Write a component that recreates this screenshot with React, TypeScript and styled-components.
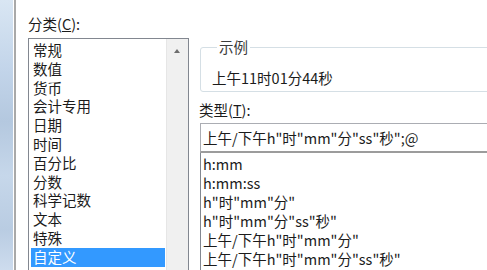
import React from 'react';
import styled, { createGlobalStyle } from 'styled-components';

const categories = ['常规', '数值', '货币', '会计专用', '日期', '时间', '百分比', '分数', '科学记数', '文本', '特殊', '自定义'];
const formats = ['h:mm', 'h:mm:ss', 'h"时"mm"分"', 'h"时"mm"分"ss"秒"', '上午/下午h"时"mm"分"', '上午/下午h"时"mm"分"ss"秒"'];

export default function App() {
  return (
    <>
      <GlobalStyle />
      <Page>
        <WindowEdge />
        <Divider />
        <Content>
          <LeftColumn>
            <Label>
              分类(<u>C</u>):
            </Label>
            <ListBox>
              <Items>
                {categories.map((c) => (
                  <CategoryItem key={c} selected={c === '自定义'}>
                    {c}
                  </CategoryItem>
                ))}
              </Items>
              <ScrollTrack>
                <UpArrow />
              </ScrollTrack>
            </ListBox>
          </LeftColumn>
          <RightColumn>
            <SampleGroup>
              <Legend>示例</Legend>
              <SampleText>上午11时01分44秒</SampleText>
            </SampleGroup>
            <TypeLabel>
              类型(<u>T</u>):
            </TypeLabel>
            <TypeInput>上午/下午h"时"mm"分"ss"秒";@</TypeInput>
            <FormatList>
              {formats.map((f) => (
                <FormatItem key={f}>{f}</FormatItem>
              ))}
            </FormatList>
          </RightColumn>
        </Content>
      </Page>
    </>
  );
}

const GlobalStyle = createGlobalStyle`
  html, body {
    margin: 0;
    padding: 0;
    background: #ffffff;
    overflow: hidden;
  }
  body {
    font-family: "Microsoft YaHei", "Noto Sans CJK SC", sans-serif;
    font-size: 14.5px;
    color: #1b1b1b;
  }
`;

const Page = styled.div`
  display: flex;
  width: 487px;
  height: 270px;
  overflow: hidden;
  background: #ffffff;
`;

const WindowEdge = styled.div`
  width: 13px;
  flex-shrink: 0;
  background: linear-gradient(
    180deg,
    #d9e6f3 0%,
    #c3d5ea 25%,
    #b4c8df 45%,
    #c6d7ea 65%,
    #b9cce2 85%,
    #cddcee 100%
  );
`;

const Divider = styled.div`
  width: 2px;
  margin-left: 1px;
  flex-shrink: 0;
  background: #a9a9a9;
`;

const Content = styled.div`
  display: flex;
  flex: 1;
  min-width: 0;
  padding-left: 11px;
  gap: 11px;
`;

const LeftColumn = styled.div`
  display: flex;
  flex-direction: column;
  width: 161px;
  flex-shrink: 0;
  padding-top: 15px;
  padding-left: 1px;
`;

const Label = styled.div`
  line-height: 18px;
  margin-bottom: 5px;
  white-space: nowrap;
`;

const ListBox = styled.div`
  display: flex;
  flex: 1;
  border: 1px solid #828790;
  border-bottom: none;
  background: #ffffff;
`;

const Items = styled.div`
  flex: 1;
  padding: 2px 1px 0 2px;
`;

const CategoryItem = styled.div<{ selected?: boolean }>`
  height: 18.8px;
  line-height: 18.8px;
  padding-left: 2px;
  white-space: nowrap;
  background: ${(p) => (p.selected ? '#3399ff' : 'transparent')};
  color: ${(p) => (p.selected ? '#ffffff' : '#1b1b1b')};
`;

const ScrollTrack = styled.div`
  position: relative;
  width: 21px;
  flex-shrink: 0;
  background: #f0f0f0;
  border-left: 1px solid #e6e6e6;
`;

const UpArrow = styled.div`
  position: absolute;
  top: 10px;
  left: 7px;
  width: 0;
  height: 0;
  border-left: 3.5px solid transparent;
  border-right: 3.5px solid transparent;
  border-bottom: 4px solid #6d6d6d;
`;

const RightColumn = styled.div`
  display: flex;
  flex-direction: column;
  flex: 1;
  min-width: 320px;
  padding-top: 39px;
`;

const SampleGroup = styled.fieldset`
  margin: 0 -40px 0 0;
  padding: 13px 10px 4px 11px;
  border: 1px solid #d5dfe5;
  border-radius: 3px;
`;

const Legend = styled.legend`
  padding: 0 2px;
  margin-left: 5px;
  line-height: 16px;
  color: #3c3c3c;
`;

const SampleText = styled.div`
  line-height: 19px;
  white-space: nowrap;
`;

const TypeLabel = styled.div`
  line-height: 18px;
  margin-top: 9px;
  margin-left: -1px;
  white-space: nowrap;
`;

const TypeInput = styled.div`
  margin-top: 4px;
  margin-right: -40px;
  height: 27px;
  line-height: 27px;
  padding-left: 2px;
  border: 1px solid #abadb3;
  border-bottom: 2px solid #9c9c9c;
  white-space: nowrap;
`;

const FormatList = styled.div`
  flex: 1;
  margin-right: -40px;
  padding: 1px 0 0 2px;
  border-left: 1px solid #828790;
`;

const FormatItem = styled.div`
  height: 19px;
  line-height: 19px;
  white-space: nowrap;
`;
